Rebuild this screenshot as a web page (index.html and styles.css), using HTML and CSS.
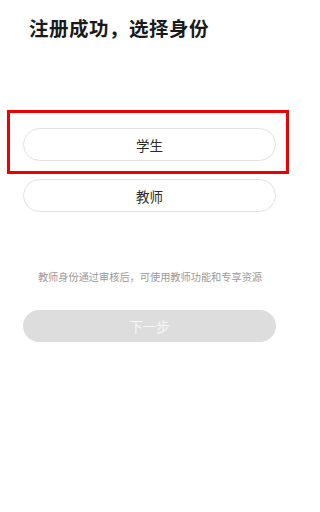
FILE: index.html
```html
<!DOCTYPE html>
<html lang="zh">
<head>
<meta charset="utf-8">
<link rel="stylesheet" href="styles.css">
</head>
<body>
<div class="page">
  <h1 class="title">注册成功，选择身份</h1>
  <div class="options">
    <div class="option-wrap is-highlighted">
      <button class="option">学生</button>
    </div>
    <div class="option-wrap">
      <button class="option">教师</button>
    </div>
  </div>
  <p class="hint">教师身份通过审核后，可使用教师功能和专享资源</p>
  <button class="next" disabled>下一步</button>
</div>
</body>
</html>
```
FILE: styles.css
```css
* { box-sizing: border-box; }
html, body {
  margin: 0;
  padding: 0;
  background: #fff;
}
body {
  font-family: "Noto Sans CJK SC", "Noto Sans", sans-serif;
  color: #222;
}
.page {
  display: flex;
  flex-direction: column;
  width: 300px;
  min-height: 512px;
}
.title {
  margin: 0;
  padding: 14px 0 0 29px;
  font-size: 19.5px;
  line-height: 28px;
  font-weight: 700;
  color: #1a1a1a;
  letter-spacing: 0.5px;
}
.options {
  display: flex;
  flex-direction: column;
  gap: 18px;
  margin: 86px 24px 0 23px;
}
.option-wrap {
  position: relative;
}
.is-highlighted::after {
  content: "";
  position: absolute;
  left: -16px;
  right: -13px;
  top: -18px;
  bottom: -13px;
  border: 3px solid #ee0000;
  pointer-events: none;
}
.option {
  display: block;
  width: 100%;
  height: 33px;
  border: 1px solid #e2e2e2;
  border-radius: 17px;
  background: #fff;
  font-family: inherit;
  font-size: 13.5px;
  color: #2a2a2a;
  padding: 0;
}
.hint {
  margin: 58px 0 0;
  text-align: center;
  font-size: 10.2px;
  line-height: 14px;
  color: #9a9a9a;
}
.next {
  margin: 26px 24px 0 23px;
  height: 32px;
  border: none;
  border-radius: 16px;
  background: #dddddd;
  color: #f6f6f6;
  font-family: inherit;
  font-size: 13.5px;
  padding: 0;
}
```
